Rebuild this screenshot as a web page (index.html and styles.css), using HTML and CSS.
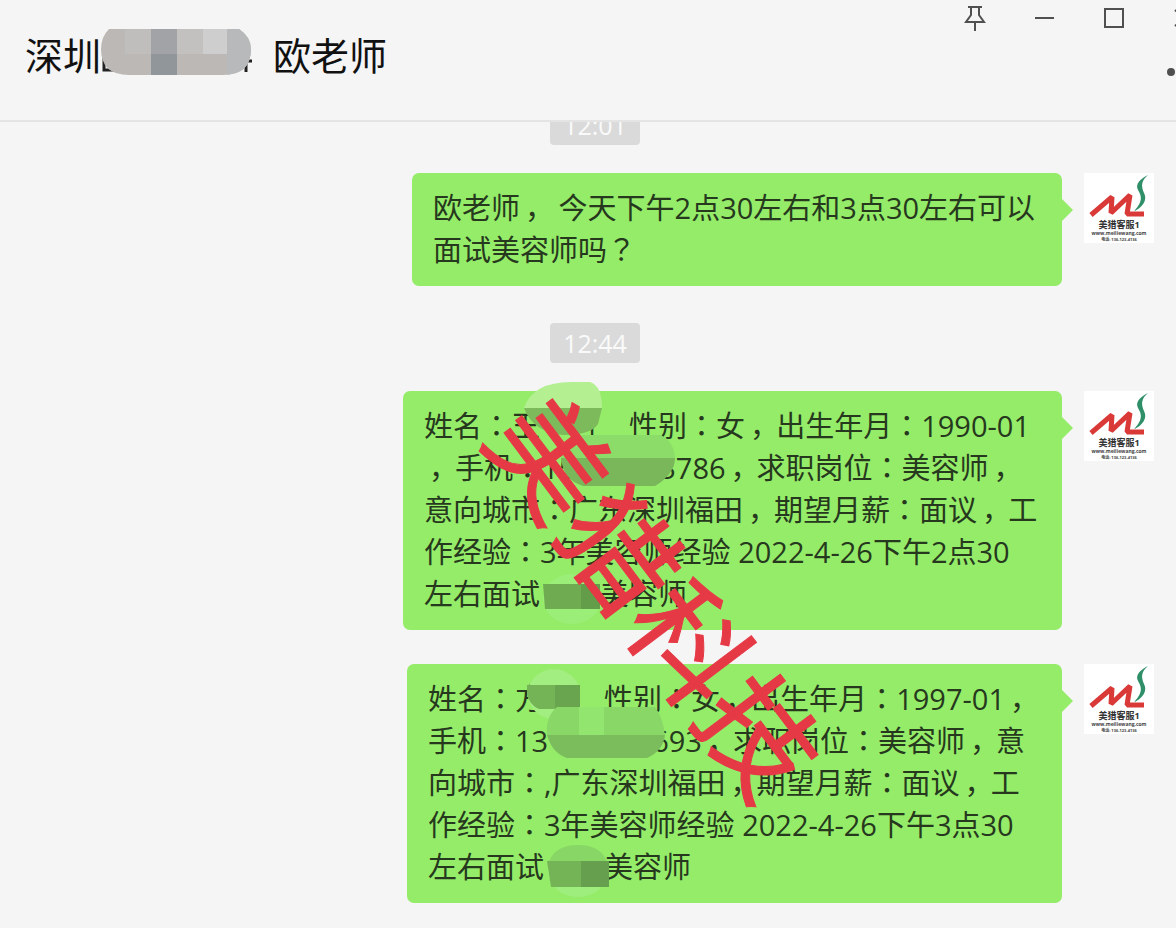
FILE: index.html
```html
<!DOCTYPE html>
<html lang="zh-CN">
<head>
  <meta charset="UTF-8">
  <meta name="viewport" content="width=device-width, initial-scale=1">
  <title>欧老师</title>
  <link rel="stylesheet" href="styles.css">
</head>
<body>
  <svg class="defs" aria-hidden="true">
    <symbol id="logo" viewBox="0 0 70 70">
      <rect width="70" height="70" fill="#fff"/>
      <path d="M7 42 L28 24 L27 40 L46 22 L43 41 H60" fill="none" stroke="#d93a38" stroke-width="5" stroke-linejoin="bevel"/>
      <path d="M64 2 C56 6 51 11 54 17 C57 22 60 28 50 38 C58 35 64 27 60 20 C57 13 57 8 64 2 Z" fill="#2f8f68"/>
      <text x="35" y="55" font-size="9" font-weight="700" text-anchor="middle" fill="#333">美猎客服1</text>
      <text x="35" y="62" font-size="5" font-weight="700" text-anchor="middle" fill="#444">www.meiliewang.com</text>
      <text x="35" y="68" font-size="4" font-weight="700" text-anchor="middle" fill="#444">电话: 136-123-4136</text>
    </symbol>
  </svg>

  <!-- Header -->
  <header class="header">
    <h1 class="title">
      <span>深圳</span>
      <svg class="title-mask" viewBox="0 0 152 50" aria-hidden="true">
        <path d="M3 30 V42 H18 M144 33 H151 M145 36 V44" fill="none" stroke="#222" stroke-width="3"/>
        <clipPath id="pill"><path d="M8 1 H138 Q150 9 150 21 Q150 47 122 47 H28 Q0 47 0 21 Q0 9 8 1 Z"/></clipPath>
        <g clip-path="url(#pill)">
          <rect width="152" height="50" fill="#bbb8b5"/>
          <rect x="24" width="26" height="26" fill="#bfbebc"/>
          <rect x="50" width="26" height="26" fill="#a1a3a7"/>
          <rect x="50" y="26" width="26" height="24" fill="#91969a"/>
          <rect x="76" width="26" height="26" fill="#c2c1bf"/>
          <rect x="102" width="24" height="26" fill="#cecece"/>
          <rect x="126" width="26" height="50" fill="#b7b9ba"/>
        </g>
      </svg>
      <span>欧老师</span>
    </h1>
    <div class="controls">
      <div class="window-buttons">
        <button type="button" aria-label="置顶">
          <svg viewBox="0 0 28 28"><path d="M8 3 H22 M11 3 V11 L6 18 H24 L19 11 V3 M15 18 V27"/></svg>
        </button>
        <button type="button" aria-label="最小化">
          <svg viewBox="0 0 28 28"><path d="M5 14 H24"/></svg>
        </button>
        <button type="button" aria-label="最大化">
          <svg viewBox="0 0 28 28"><path d="M5 5 H23 V23 H5 Z"/></svg>
        </button>
        <button type="button" aria-label="关闭">
          <svg viewBox="0 0 28 28"><path d="M5 6 L22 22 M22 6 L5 22"/></svg>
        </button>
      </div>
      <button type="button" class="more" aria-label="更多">
        <svg viewBox="0 0 40 28"><circle cx="7" cy="14" r="3"/><circle cx="20" cy="14" r="3"/><circle cx="33" cy="14" r="3"/></svg>
      </button>
    </div>
  </header>

  <!-- Messages -->
  <main class="chat">
    <time class="time">12:01</time>

    <div class="message">
      <p class="bubble bubble-short">欧老师<i>，</i> 今天下午2点30左右和3点30左右可以<br>面试美容师吗<b lang="ja">？</b></p>
      <svg class="avatar" role="img" aria-label="美猎客服1"><use href="#logo"/></svg>
    </div>

    <time class="time">12:44</time>

    <div class="message">
      <div class="bubble bubble-long">
        姓名<b lang="ja">：</b>王<span class="gap gap-s"></span>且<span class="gap gap-s"></span>性别<b lang="ja">：</b>女<i>，</i>出生年月<b lang="ja">：</b>1990-01<br>
        <i>，</i>手机<b lang="ja">：</b>15<span class="gap gap-l"></span>3786<i>，</i>求职岗位<b lang="ja">：</b>美容师<i>，</i><br>
        意向城市<b lang="ja">：</b>广东深圳福田<i>，</i>期望月薪<b lang="ja">：</b>面议<i>，</i>工<br>
        作经验<b lang="ja">：</b>3年美容师经验 2022-4-26下午2点30<br>
        左右面试<span class="gap gap-m"></span>美容师
        <svg class="mask" viewBox="0 0 300 260" aria-hidden="true">
          <path d="M121 26 Q130 0 168 0 H187 Q199 4 199 26 Z" fill="#b4f092"/>
          <path d="M121 26 H199 L195 42 Q188 53 160 53 Q130 50 121 26 Z" fill="#7dba5c"/>
          <path d="M172 53 H258 Q271 60 272 76 H158 Q160 60 172 53 Z" fill="#8bdc68"/>
          <path d="M158 76 H272 Q272 92 252 104 H180 Q160 98 158 76 Z" fill="#79b75a"/>
          <ellipse cx="169" cy="217" rx="29" ry="25" fill="#9bee77"/>
          <path d="M140 202 H197 V227 H142 Z" fill="#6fac51"/>
          <path d="M178 202 H197 V227 H178 Z" fill="#649d49"/>
        </svg>
      </div>
      <svg class="avatar" role="img" aria-label="美猎客服1"><use href="#logo"/></svg>
    </div>

    <div class="message">
      <div class="bubble bubble-mid">
        姓名<b lang="ja">：</b>方<span class="gap gap-m"></span>性别<b lang="ja">：</b>女<i>，</i>出生年月<b lang="ja">：</b>1997-01<i>，</i><br>
        手机<b lang="ja">：</b>13<span class="gap gap-xl"></span>693<i>，</i>求职岗位<b lang="ja">：</b>美容师<i>，</i>意<br>
        向城市<b lang="ja">：</b>,广东深圳福田<i>，</i>期望月薪<b lang="ja">：</b>面议<i>，</i>工<br>
        作经验<b lang="ja">：</b>3年美容师经验 2022-4-26下午3点30<br>
        左右面试<span class="gap gap-m"></span>美容师
        <svg class="mask" viewBox="0 0 300 260" aria-hidden="true">
          <ellipse cx="147" cy="39" rx="26" ry="25" fill="#a3ee80"/>
          <path d="M120 30 H173 V54 H132 Q122 50 120 38 Z" fill="#74b457"/>
          <path d="M148 30 H173 V54 H148 Z" fill="#69a54f"/>
          <path d="M150 52 H248 Q256 62 258 81 H140 Q138 62 150 52 Z" fill="#88d767"/>
          <path d="M172 52 H197 V80 H172 Z" fill="#92e56e"/>
          <path d="M140 80 H258 Q256 96 240 103 H160 Q145 98 140 80 Z" fill="#7bbd5d"/>
          <ellipse cx="171" cy="216" rx="30" ry="26" fill="#9eee7d"/>
          <path d="M142 207 Q148 190 171 190 Q194 190 200 207 Z" fill="#87d666"/>
          <path d="M140 206 H202 V232 H144 Z" fill="#74b457"/>
          <path d="M174 206 H202 V232 H174 Z" fill="#669f4d"/>
        </svg>
      </div>
      <svg class="avatar" role="img" aria-label="美猎客服1"><use href="#logo"/></svg>
    </div>
  </main>

  <div class="watermark">美猎科技</div>
</body>
</html>
```
FILE: styles.css
```css
* {
  box-sizing: border-box;
}
body {
  position: relative;
  display: flex;
  flex-direction: column;
  height: 100vh;
  margin: 0;
  overflow: hidden;
  background-color: #f5f5f5;
  color: #26381d;
  font-family: "Open Sans", "Noto Sans CJK SC", sans-serif;
}
.defs {
  display: none;
}

/* Header */
.header {
  display: flex;
  flex: none;
  justify-content: space-between;
  height: 122px;
  padding-left: 25px;
  border-bottom: 2px solid #e4e4e4;
  overflow: hidden;
}
.title {
  display: flex;
  align-items: flex-start;
  margin: 28px 0 0;
  color: #111;
  font-size: 38px;
  font-weight: 400;
  line-height: 54px;
}
.title-mask {
  width: 152px;
  height: 50px;
  margin-right: 20px;
}
.controls {
  display: flex;
  flex-direction: column;
  align-items: flex-end;
  gap: 26px;
  margin-right: -28px;
  padding-top: 4px;
}
.window-buttons {
  display: flex;
  gap: 30px;
}
.controls button {
  display: flex;
  justify-content: center;
  width: 40px;
  padding: 0;
  background: none;
  border: none;
  cursor: pointer;
}
.controls svg {
  width: 28px;
  height: 28px;
  fill: none;
  stroke: #505050;
  stroke-width: 2;
}
.controls .more svg {
  width: 40px;
  fill: #505050;
}

/* Messages, newest kept at the bottom */
.chat {
  display: flex;
  flex: 1;
  flex-direction: column;
  justify-content: flex-end;
  min-height: 0;
  padding: 0 22px 25px;
  overflow: hidden;
}
.time {
  flex: none;
  align-self: center;
  margin: 37px 0 28px 14px;
  padding: 0 13px;
  background-color: #dadada;
  border-radius: 4px;
  color: #fafafa;
  font-size: 25px;
  line-height: 40px;
}
.message {
  display: flex;
  flex: none;
  justify-content: flex-end;
  gap: 22px;
}
.message + .message {
  margin-top: 34px;
}
.bubble {
  position: relative;
  margin: 0;
  padding: 14px 0 15px 21px;
  background-color: #95ec69;
  border-radius: 7px;
  font-size: 29px;
  line-height: 42px;
  white-space: nowrap;
}
.bubble::after {
  content: "";
  position: absolute;
  top: 26px;
  left: 100%;
  border: solid transparent;
  border-width: 11px 0 11px 11px;
  border-left-color: #95ec69;
}
.bubble-short {
  min-width: 650px;
}
.bubble-mid {
  min-width: 655px;
}
.bubble-long {
  min-width: 659px;
}
/* Full-width marks sit in the middle of their cell */
.bubble b {
  font-family: "Noto Sans CJK JP", sans-serif;
  font-weight: 400;
  line-height: 1;
}
.bubble i {
  margin-right: -3px;
  padding-left: 5px;
  font-style: normal;
}
.avatar {
  flex: none;
  width: 70px;
  height: 70px;
}

/* Hidden names and numbers */
.gap {
  display: inline-block;
}
.gap-s {
  width: 30px;
}
.gap-m {
  width: 60px;
}
.gap-l {
  width: 84px;
}
.gap-xl {
  width: 104px;
}
.mask {
  position: absolute;
  top: -9px;
  left: 0;
  width: 300px;
  height: 260px;
}

.watermark {
  position: absolute;
  top: 593px;
  left: 661px;
  color: #e63946;
  font-family: "Noto Sans CJK SC", sans-serif;
  font-size: 116px;
  font-weight: 400;
  line-height: 1;
  white-space: nowrap;
  transform: translate(-50%, -50%) rotate(53deg);
  -webkit-text-stroke: 1px #e63946;
}
```
